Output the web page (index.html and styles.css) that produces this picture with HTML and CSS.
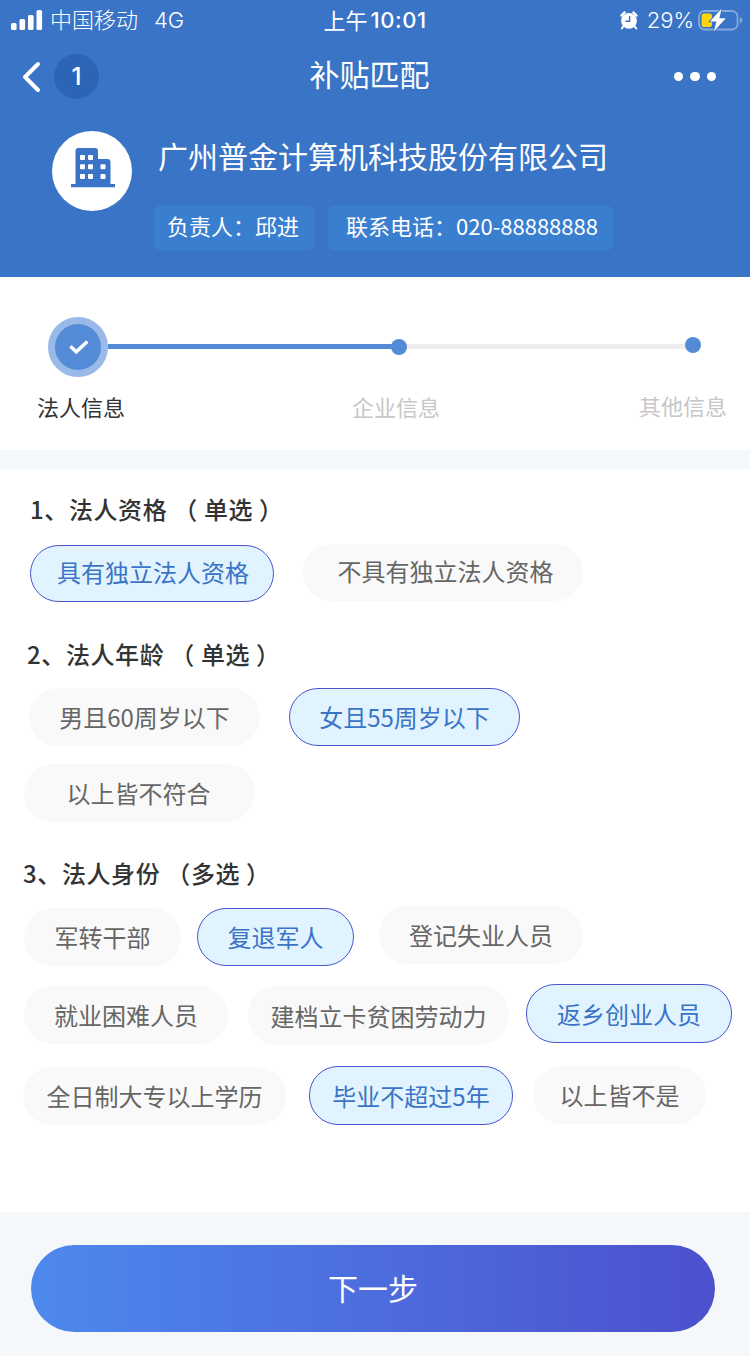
FILE: index.html
```html
<!DOCTYPE html>
<html lang="zh-CN">
<head>
    <meta charset="UTF-8">
    <meta name="viewport" content="width=device-width, initial-scale=1.0">
    <title>补贴匹配</title>
    <link rel="stylesheet" href="styles.css">
</head>
<body>
    <header class="header">
        <div class="status-bar">
            <div class="status-left">
                <svg width="32" height="20" viewBox="0 0 32 20" fill="#fff">
                    <rect x="0" y="13" width="5.6" height="7" rx="1.6"/>
                    <rect x="8.5" y="9" width="5.6" height="11" rx="1.6"/>
                    <rect x="17" y="5" width="5.6" height="15" rx="1.6"/>
                    <rect x="25.5" y="0" width="5.6" height="20" rx="1.6"/>
                </svg>
                <span class="carrier">中国移动</span>
                <span class="network">4G</span>
            </div>
            <div class="status-time"><span class="period">上午</span><span class="clock">10:01</span></div>
            <div class="status-right">
                <svg width="18" height="19" viewBox="0 0 18 19">
                    <circle cx="9" cy="9.8" r="7.9" fill="#fff"/>
                    <path d="M1.4 4.6 4.6 1.4M16.6 4.6 13.4 1.4" stroke="#fff" stroke-width="2.2" stroke-linecap="round"/>
                    <path d="M3.5 15 1.8 17.5M14.5 15 16.2 17.5" stroke="#fff" stroke-width="2" stroke-linecap="round"/>
                    <path d="M9.6 5V10.3H5.4" fill="none" stroke="#3a74c6" stroke-width="1.4"/>
                </svg>
                <span class="percent">29%</span>
                <svg width="46" height="24" viewBox="0 0 46 24">
                    <rect x="1" y="3" width="38.5" height="18.5" rx="5.5" fill="none" stroke="#83a9dd" stroke-width="1.8"/>
                    <path d="M41.8 9Q44.5 10 44.5 12.3T41.8 15.6Z" fill="#83a9dd"/>
                    <rect x="3.6" y="5.6" width="10.4" height="13.4" rx="2.8" fill="#ffd60a"/>
                    <path d="M23.5 .8 12 13.4H18.4L15.8 23.4 27.8 10.3H21.4Z" fill="#fff" stroke="#3a74c6" stroke-width="1.8" paint-order="stroke"/>
                </svg>
            </div>
        </div>

        <div class="nav-bar">
            <div class="nav-left">
                <svg width="20" height="32" viewBox="0 0 20 32" fill="none" stroke="#fff" stroke-width="4" stroke-linecap="round" stroke-linejoin="round">
                    <path d="M17 3 4 16 17 29"/>
                </svg>
                <span class="nav-badge">1</span>
            </div>
            <h1 class="nav-title">补贴匹配</h1>
            <div class="nav-more"><i></i><i></i><i></i></div>
        </div>

        <div class="company">
            <div class="company-logo">
                <svg width="44" height="40" viewBox="0 0 44 40">
                    <path d="M0 36H4.5V3Q4.5 0 7.5 0H24Q27 0 27 3V11H36.5Q39.5 11 39.5 14V36H44V39.3H0Z" fill="#3a74c6"/>
                    <g fill="#fff">
                        <rect x="9" y="7" width="5" height="5" rx="1"/>
                        <rect x="17" y="7" width="5" height="5" rx="1"/>
                        <rect x="9" y="16.3" width="5" height="5" rx="1"/>
                        <rect x="17" y="16.3" width="5" height="5" rx="1"/>
                        <rect x="29.5" y="16.3" width="5" height="5" rx="1"/>
                        <rect x="9" y="26" width="5" height="5" rx="1"/>
                        <rect x="17" y="26" width="5" height="5" rx="1"/>
                        <rect x="29.5" y="26" width="5" height="5" rx="1"/>
                    </g>
                </svg>
            </div>
            <div class="company-info">
                <h2 class="company-name">广州普金计算机科技股份有限公司</h2>
                <div class="company-tags">
                    <span class="tag tag-owner">负责人：邱进</span>
                    <span class="tag tag-phone">联系电话：020-88888888</span>
                </div>
            </div>
        </div>
    </header>

    <section class="steps">
        <div class="steps-track">
            <div class="step-done">
                <svg width="20" height="15" viewBox="0 0 20 15" fill="none" stroke="#fff" stroke-width="3.4">
                    <path d="M1.4 6.2 7.3 11.8 18.3 1.4"/>
                </svg>
            </div>
            <div class="step-line step-line-active"></div>
            <div class="step-dot"></div>
            <div class="step-line"></div>
            <div class="step-dot step-dot-last"></div>
        </div>
        <div class="steps-labels">
            <span class="current">法人信息</span>
            <span>企业信息</span>
            <span class="last">其他信息</span>
        </div>
    </section>

    <main class="questions">
        <section class="question q1">
            <h3>1、法人资格 （ 单选 ）</h3>
            <div class="options">
                <button class="chip w-244 down-1 active">具有独立法人资格</button>
                <button class="chip w-280">不具有独立法人资格</button>
            </div>
        </section>

        <section class="question q2">
            <h3>2、法人年龄 （ 单选 ）</h3>
            <div class="options">
                <button class="chip w-231">男且60周岁以下</button>
                <button class="chip w-231 active">女且55周岁以下</button>
            </div>
            <div class="options options-wrap">
                <button class="chip w-231">以上皆不符合</button>
            </div>
        </section>

        <section class="question q3">
            <h3>3、法人身份 （多选 ）</h3>
            <div class="options row-1">
                <button class="chip w-157 down-2">军转干部</button>
                <button class="chip w-157 down-2 active">复退军人</button>
                <button class="chip w-204 unemployed">登记失业人员</button>
            </div>
            <div class="options row-2">
                <button class="chip w-204 down-2">就业困难人员</button>
                <button class="chip w-261 down-2 tall">建档立卡贫困劳动力</button>
                <button class="chip w-206 tall active">返乡创业人员</button>
            </div>
            <div class="options row-3">
                <button class="chip w-263 down-1">全日制大专以上学历</button>
                <button class="chip w-204 tall active">毕业不超过5年</button>
                <button class="chip w-173">以上皆不是</button>
            </div>
        </section>
    </main>

    <footer class="footer">
        <button class="next-button">下一步</button>
    </footer>

    <script>
        document.querySelectorAll('.question').forEach(function (question) {
            const multiple = question.classList.contains('q3');
            const chips = question.querySelectorAll('.chip');
            chips.forEach(function (chip) {
                chip.addEventListener('click', function () {
                    if (multiple) {
                        chip.classList.toggle('active');
                        return;
                    }
                    chips.forEach(c => c.classList.remove('active'));
                    chip.classList.add('active');
                });
            });
        });
    </script>
</body>
</html>
```
FILE: styles.css
```css
:root {
    --primary: #3a74c6;
    --primary-dark: #2c65b6;
    --tag: #3a7ecf;
    --step: #548bd7;
    --step-ring: #99b9e8;
    --active-bg: #e1f3fe;
    --active-border: #4b54d0;
    --chip-bg: #f9f9f9;
    --page-gray: #f4f8fb;
}

* {
    margin: 0;
    padding: 0;
    box-sizing: border-box;
}

body {
    width: 750px;
    height: 1356px;
    display: flex;
    flex-direction: column;
    background: #fff;
    color: #333;
    font-family: "Noto Sans CJK SC", sans-serif;
    overflow: hidden;
}

button {
    border: none;
    font-family: inherit;
    cursor: pointer;
}

svg {
    display: block;
    flex: none;
}

.header {
    height: 277px;
    background: var(--primary);
    color: #fff;
}

/* status bar */
.status-bar {
    height: 37px;
    padding: 0 6px 0 11px;
    display: grid;
    grid-template-columns: 1fr 104px 1fr;
    align-items: center;
    font-size: 22px;
    line-height: 36px;
}

.status-left,
.status-right,
.status-time {
    display: flex;
    align-items: center;
    white-space: nowrap;
}

.status-time {
    margin-left: -2px;
}

.status-right {
    justify-content: flex-end;
}

.carrier {
    margin-left: 7px;
    padding-bottom: 4px;
    font-weight: 300;
}

.network {
    margin-left: 16px;
    font-family: Inter, sans-serif;
    font-weight: 300;
}

.period {
    padding-bottom: 3px;
}

.clock {
    margin-left: 3px;
    font-family: Inter, sans-serif;
    font-weight: 500;
    letter-spacing: 0.6px;
}

.percent {
    margin: 0 4px 0 9px;
    font-family: Inter, sans-serif;
    font-weight: 300;
}

/* navigation */
.nav-bar {
    height: 79px;
    padding: 0 34px 0 21px;
    display: grid;
    grid-template-columns: 1fr 118px 1fr;
    align-items: center;
}

.nav-left {
    display: flex;
    align-items: center;
    gap: 13px;
}

.nav-badge {
    width: 45px;
    height: 45px;
    border-radius: 50%;
    background: var(--primary-dark);
    font: 500 24px/46px Inter, sans-serif;
    text-align: center;
}

.nav-title {
    font-size: 30px;
    font-weight: 400;
    line-height: 44px;
    white-space: nowrap;
    padding-bottom: 7px;
}

.nav-more {
    display: flex;
    justify-content: flex-end;
    gap: 7px;
}

.nav-more i {
    width: 9.5px;
    height: 9.5px;
    border-radius: 50%;
    background: #fff;
}

/* company */
.company {
    display: flex;
    padding: 15px 0 0 52px;
}

.company-logo {
    width: 80px;
    height: 80px;
    border-radius: 50%;
    background: #fff;
    display: flex;
    justify-content: center;
    padding-top: 17px;
    padding-left: 2px;
}

.company-info {
    margin-left: 22px;
}

.company-name {
    margin-left: 4px;
    font-size: 30px;
    font-weight: 400;
    line-height: 48px;
}

.company-tags {
    display: flex;
    gap: 14px;
    margin-top: 27px;
}

.tag {
    height: 44px;
    border-radius: 5px;
    background: var(--tag);
    font-size: 22px;
    line-height: 39px;
    white-space: nowrap;
}

.tag-owner {
    width: 160px;
    padding-left: 13px;
}

.tag-phone {
    width: 285px;
    padding-left: 18px;
}

/* steps */
.steps {
    height: 192px;
    border-bottom: 19px solid var(--page-gray);
}

.steps-track {
    display: flex;
    align-items: center;
    padding: 40px 49px 0 48px;
}

.step-done {
    width: 60px;
    height: 60px;
    border: 7.5px solid var(--step-ring);
    border-radius: 50%;
    background: var(--step);
    display: flex;
    align-items: center;
    justify-content: center;
    padding-left: 2px;
}

.step-line {
    flex: 1;
    height: 5px;
    margin: -1px -1px 0;
    background: #eee;
}

.step-line-active {
    flex: none;
    width: 284px;
    margin-left: 0;
    background: var(--step);
}

.step-dot {
    width: 16px;
    height: 16px;
    border-radius: 50%;
    background: var(--step);
    z-index: 1;
}

.step-dot-last {
    margin-bottom: 4px;
}

.steps-labels {
    display: flex;
    justify-content: space-between;
    padding: 13px 23px 0 37px;
    font-size: 22px;
    line-height: 32px;
    color: #c7c7c7;
}

.steps-labels .current {
    color: #333;
}

.steps-labels .last {
    margin-left: -28px;
    margin-top: -1px;
}

/* questions */
.questions {
    height: 743px;
    padding-left: 23px;
}

.question h3 {
    font-size: 24px;
    font-weight: 500;
    line-height: 36px;
    letter-spacing: 0.6px;
    white-space: pre;
}

.q1 {
    padding: 22px 0 0 7px;
}

.q2 {
    padding-top: 34px;
}

.q2 h3 {
    margin-left: 4px;
}

.q3 {
    padding-top: 33px;
}

.options {
    display: flex;
    align-items: flex-start;
    gap: 29px;
    margin-top: 17px;
}

.q2 .options {
    margin-top: 16px;
    padding-left: 6px;
}

.q2 .options-wrap {
    margin-top: 18px;
    padding-left: 1px;
}

.q3 .row-1 {
    gap: 16px;
    margin-top: 15px;
    padding-left: 1px;
}

.q3 .row-2 {
    gap: 20px;
    margin-top: 18px;
    padding-left: 1px;
}

.q3 .row-3 {
    gap: 20px;
    margin-top: 21px;
}

.chip {
    height: 58px;
    border: 1px solid transparent;
    border-radius: 29px;
    background: var(--chip-bg);
    background-clip: border-box;
    color: #666;
    font-size: 24px;
    line-height: 54px;
    white-space: nowrap;
}

.chip.active {
    background: var(--active-bg);
    border-color: var(--active-border);
    color: var(--primary);
}

.q1 .chip {
    height: 57px;
    padding-bottom: 4px;
    padding-left: 2px;
    line-height: 50px;
}

.q1 .w-280 {
    padding-left: 5px;
}

.options-wrap .chip {
    padding-right: 2px;
}

.chip.tall {
    height: 59px;
}

.chip.down-1 {
    margin-top: 1px;
}

.chip.down-2 {
    margin-top: 2px;
}

.unemployed {
    margin-left: 9px;
}

.row-2 .active {
    margin-left: -3px;
}

.row-3 .active {
    margin-left: 3px;
}

.w-157 { width: 157px; }
.w-173 { width: 173px; }
.w-204 { width: 204px; }
.w-206 { width: 206px; }
.w-231 { width: 231px; }
.w-244 { width: 244px; }
.w-261 { width: 261px; }
.w-263 { width: 263px; }
.w-280 { width: 280px; }

/* footer */
.footer {
    flex: 1;
    padding: 33px 35px 24px 31px;
    background: var(--page-gray);
}

.next-button {
    width: 684px;
    height: 87px;
    padding-bottom: 4px;
    border-radius: 44px;
    background: linear-gradient(90deg, #4d89ed, #4c50cd);
    color: #fff;
    font-size: 30px;
    line-height: 80px;
}
```
